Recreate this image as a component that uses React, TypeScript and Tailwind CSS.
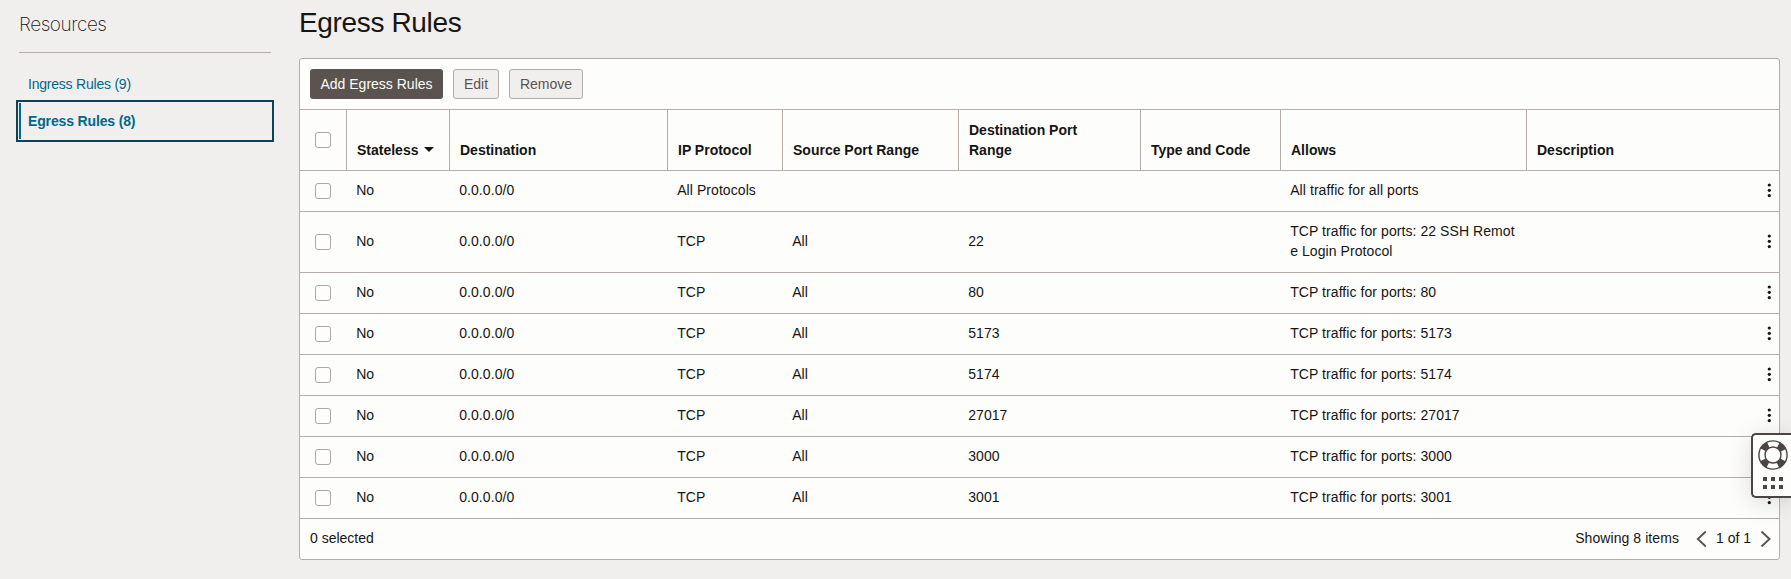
import React from "react";

type Rule = { protocol: string; source: string; port: string; allows: string };

const rules: Rule[] = [
  { protocol: "All Protocols", source: "", port: "", allows: "All traffic for all ports" },
  { protocol: "TCP", source: "All", port: "22", allows: "TCP traffic for ports: 22 SSH Remote Login Protocol" },
  { protocol: "TCP", source: "All", port: "80", allows: "TCP traffic for ports: 80" },
  { protocol: "TCP", source: "All", port: "5173", allows: "TCP traffic for ports: 5173" },
  { protocol: "TCP", source: "All", port: "5174", allows: "TCP traffic for ports: 5174" },
  { protocol: "TCP", source: "All", port: "27017", allows: "TCP traffic for ports: 27017" },
  { protocol: "TCP", source: "All", port: "3000", allows: "TCP traffic for ports: 3000" },
  { protocol: "TCP", source: "All", port: "3001", allows: "TCP traffic for ports: 3001" },
];

const columns = "grid grid-cols-[47px_103px_218px_115px_176px_182px_140px_246px_1fr]";

function Checkbox() {
  return <span role="checkbox" aria-checked="false" className="block size-4 rounded-[3px] border border-[#aea8a3] bg-[#fdfdfb]" />;
}

function HeaderCell({ children, last = false }: { children: React.ReactNode; last?: boolean }) {
  return (
    <div className={`flex items-end pb-2.5 pl-2.5 ${last ? "" : "border-r border-[#b4aca6]"}`}>
      {children}
    </div>
  );
}

function Cell({ children }: { children?: React.ReactNode }) {
  return <div className="flex items-center pr-2.5 pb-px pl-[9.2px] tracking-[0.07px]">{children}</div>;
}

function RuleRow({ rule }: { rule: Rule }) {
  return (
    <div className={`${columns} min-h-[41px] border-b border-[#b4aca6] pt-[9px] pb-2.5`}>
      <div className="flex items-center pt-px pl-[15px]">
        <Checkbox />
      </div>
      <Cell>No</Cell>
      <Cell>0.0.0.0/0</Cell>
      <Cell>{rule.protocol}</Cell>
      <Cell>{rule.source}</Cell>
      <Cell>{rule.port}</Cell>
      <Cell />
      <Cell>
        <span className="break-all">{rule.allows}</span>
      </Cell>
      <div className="flex items-center justify-end pr-2">
        <svg width="4" height="15" viewBox="0 0 4 15" fill="#161513">
          <circle cx="2.3" cy="2" r="1.6" />
          <circle cx="2.3" cy="7.3" r="1.6" />
          <circle cx="2.3" cy="12.6" r="1.6" />
        </svg>
      </div>
    </div>
  );
}

function Chevron({ d }: { d: string }) {
  return (
    <svg className="mt-[3px]" width="11" height="18" viewBox="0 0 11 18" fill="none" stroke="#5b534f" strokeWidth="1.9">
      <path d={d} />
    </svg>
  );
}

function HelpWidget() {
  return (
    <div className="absolute top-[433px] right-0 flex h-[65px] w-10 flex-col items-center rounded-l-[5px] border-2 border-r-0 border-[#4b4642] bg-[#fdfdfb] pt-[5px] pl-[2px] shadow-[0_4px_24px_rgba(0,0,0,0.14)]">
      <svg width="30" height="30" viewBox="0 0 30 30" fill="none" stroke="#4b4642">
        <circle cx="15" cy="15" r="11.2" strokeWidth="6.4" strokeDasharray="7.2 10.393" strokeDashoffset="-5.2" />
        <circle cx="15" cy="15" r="14.1" strokeWidth="1.4" />
        <circle cx="15" cy="15" r="8" strokeWidth="1.4" />
      </svg>
      <svg className="mt-[7px]" width="20" height="12" viewBox="0 0 20 12" fill="#4b4642">
        <path d="M0 0h4v4H0zM8 0h4v4H8zM16 0h4v4h-4zM0 8h4v4H0zM8 8h4v4H8zM16 8h4v4h-4z" />
      </svg>
    </div>
  );
}

export default function App() {
  return (
    <div className="relative flex h-[579px] w-[1791px] overflow-hidden bg-[#f1efee] font-['Liberation_Sans',Arial,sans-serif] text-sm leading-5 text-[#161513]">
      <aside className="w-[299px] shrink-0 pt-[11px] pl-4">
        <h2 className="ml-[3px] w-[252px] border-b border-[#b4aca6] pb-[13px] font-['Inter',sans-serif] text-[19px] leading-7 font-extralight tracking-[-0.45px]">Resources</h2>
        <nav className="mt-5 text-[#00688c]">
          <a className="block h-[27px] pl-3 leading-[23px] tracking-[-0.22px]">Ingress Rules (9)</a>
          <a className="flex h-[42px] w-[258px] items-center border-2 border-[#0b4459] p-px font-bold">
            <span className="h-9 w-0.5 bg-[#00688c]" />
            <span className="pl-[7px] tracking-[-0.15px]">Egress Rules (8)</span>
          </a>
        </nav>
      </aside>
      <main className="w-[1481px]">
        <h1 className="flex h-[58px] items-start pt-[5px] text-[28px] leading-9 tracking-[-0.35px]">Egress Rules</h1>
        <section className="h-[502px] rounded-[3px] border border-[#b4aca6] bg-[#fdfdfb]">
          <div className="flex h-[51px] items-center gap-2.5 border-b border-[#b4aca6] pl-2.5">
            <button className="h-[30px] w-[133px] rounded-[3px] bg-[#5b534f] text-[#fdfdfb]">Add Egress Rules</button>
            <button className="h-[30px] w-[46px] rounded-[3px] border border-[#b4aca6] bg-[#f1efee] text-[#5b534f]">Edit</button>
            <button className="h-[30px] w-[74px] rounded-[3px] border border-[#b4aca6] bg-[#f1efee] text-[#5b534f]">Remove</button>
          </div>
          <div className={`${columns} h-[61px] border-b border-[#b4aca6] font-bold`}>
            <div className="flex items-center border-r border-[#b4aca6] pl-[15px]">
              <Checkbox />
            </div>
            <HeaderCell>
              <span>Stateless</span>
              <svg className="mb-2 ml-[6px]" width="10" height="5" viewBox="0 0 10 5" fill="#161513">
                <path d="M0 0h10L5 5z" />
              </svg>
            </HeaderCell>
            <HeaderCell>Destination</HeaderCell>
            <HeaderCell>IP Protocol</HeaderCell>
            <HeaderCell>Source Port Range</HeaderCell>
            <HeaderCell>
              <span className="w-[120px]">Destination Port Range</span>
            </HeaderCell>
            <HeaderCell>Type and Code</HeaderCell>
            <HeaderCell>Allows</HeaderCell>
            <HeaderCell last>Description</HeaderCell>
          </div>
          {rules.map((rule, i) => (
            <RuleRow key={i} rule={rule} />
          ))}
          <footer className="flex h-10 items-center justify-between pr-2 pb-[3px] pl-2.5">
            <span>0 selected</span>
            <div className="flex items-center">
              <span className="mr-[17px] tracking-[0.07px]">Showing 8 items</span>
              <Chevron d="M9.8 1.5 1.8 9l8 7.5" />
              <span className="mx-[9px]">1 of 1</span>
              <Chevron d="M1.5 1.5 9.5 9l-8 7.5" />
            </div>
          </footer>
        </section>
      </main>
      <HelpWidget />
    </div>
  );
}
